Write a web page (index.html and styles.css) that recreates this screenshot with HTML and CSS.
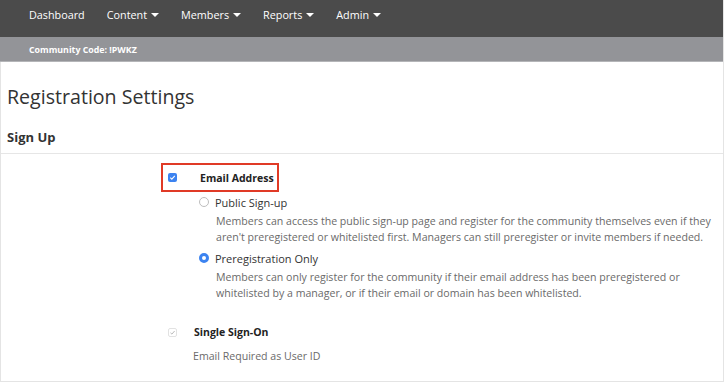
FILE: index.html
```html
<!DOCTYPE html>
<html lang="en">
<head>
    <meta charset="UTF-8">
    <meta name="viewport" content="width=device-width, initial-scale=1.0">
    <title>Registration Settings</title>
    <link rel="stylesheet" href="styles.css">
</head>
<body>
    <div class="frame">
        <nav class="topnav">
            <a href="#">Dashboard</a>
            <a href="#">Content <span class="caret"></span></a>
            <a href="#">Members <span class="caret"></span></a>
            <a href="#">Reports <span class="caret"></span></a>
            <a href="#">Admin <span class="caret"></span></a>
        </nav>
        <div class="codebar">Community Code: !PWKZ</div>

        <div class="page">
            <h1>Registration Settings</h1>
            <h2 class="section-title">Sign Up</h2>

            <div class="field">
                <div class="highlight">
                    <svg class="box" width="9" height="9" viewBox="0 0 9 9">
                        <rect width="9" height="9" rx="2" fill="#3c83f0"/>
                        <path d="M2.3 4.7 L3.8 6.1 L6.8 2.8" fill="none" stroke="#fff" stroke-width="1.1"/>
                    </svg>
                    <span class="field-label">Email Address</span>
                </div>
            </div>

            <div class="options">
                <div class="option">
                    <div class="option-head">
                        <span class="radio"></span>
                        <span>Public Sign-up</span>
                    </div>
                    <p class="desc">Members can access the public sign-up page and register for the community themselves even if they aren't preregistered or whitelisted first. Managers can still preregister or invite members if needed.</p>
                </div>
                <div class="option">
                    <div class="option-head">
                        <span class="radio checked"></span>
                        <span>Preregistration Only</span>
                    </div>
                    <p class="desc">Members can only register for the community if their email address has been preregistered or whitelisted by a manager, or if their email or domain has been whitelisted.</p>
                </div>
            </div>

            <div class="field sso">
                <svg class="box" width="9" height="9" viewBox="0 0 9 9">
                    <rect x="0.5" y="0.5" width="8" height="8" rx="1.5" fill="#fff" stroke="#e2e2e2"/>
                    <path d="M2.5 4.8 L3.9 6.1 L6.6 3" fill="none" stroke="#b9b9b9" stroke-width="1"/>
                </svg>
                <span class="field-label">Single Sign-On</span>
            </div>
            <p class="note">Email Required as User ID</p>
        </div>
    </div>
</body>
</html>
```

FILE: styles.css
```css
body {
    margin: 0;
    font-family: 'Open Sans', 'Liberation Sans', sans-serif;
    background: #fff;
}

.frame {
    width: 723px;
    height: 381px;
    border-right: 1px solid #e4e4e4;
    border-bottom: 1px solid #e4e4e4;
    overflow: hidden;
}

.topnav {
    height: 37px;
    background: #4b4b4b;
    display: flex;
    align-items: center;
    gap: 22px;
    padding: 0 0 8px 29px;
    box-sizing: border-box;
}

.topnav a {
    color: #fff;
    text-decoration: none;
    font-size: 10.8px;
    display: flex;
    align-items: center;
    gap: 4px;
}

.caret {
    width: 0;
    height: 0;
    border-left: 4px solid transparent;
    border-right: 4px solid transparent;
    border-top: 4px solid #fff;
}

.codebar {
    height: 21px;
    background: #939498;
    border-bottom: 1px solid #b4b5b8;
    color: #fff;
    font-size: 8.8px;
    font-weight: bold;
    line-height: 20px;
    padding: 3px 0 0 29px;
}

.page {
    border-left: 1px solid #e4e4e4;
    height: 320px;
    color: #333;
}

h1 {
    margin: 0;
    padding: 22px 0 0 6px;
    font-size: 19.6px;
    font-weight: normal;
    line-height: 26px;
}

.section-title {
    margin: 0;
    padding: 18px 0 7px 6px;
    font-size: 13px;
    font-weight: bold;
    line-height: 18px;
    border-bottom: 1px solid #e6e6e6;
}

.field {
    display: flex;
    align-items: center;
    padding-left: 160px;
    margin-top: 9px;
}

.highlight {
    display: flex;
    align-items: center;
    border: 2px solid #e03a26;
    width: 109px;
    height: 25px;
    padding-left: 5px;
    gap: 23px;
}

.field-label {
    font-size: 10.5px;
    font-weight: bold;
    color: #222;
}

.options {
    padding-left: 198px;
    margin-top: 2px;
}

.option {
    margin-bottom: 5px;
}

.option-head {
    display: flex;
    align-items: center;
    gap: 6px;
    font-size: 11px;
    color: #333;
    height: 16px;
}

.radio {
    width: 10px;
    height: 10px;
    border-radius: 50%;
    border: 1px solid #bdbdbd;
    box-sizing: border-box;
}

.radio.checked {
    border: 3px solid #3c83f0;
    background: #fff;
}

.desc {
    margin: 3px 0 0 17px;
    font-size: 10.6px;
    line-height: 16px;
    color: #6a6a6a;
    width: 500px;
}

.sso {
    margin-top: 24px;
    padding-left: 167px;
    gap: 17px;
}

.note {
    margin: 10px 0 0 192px;
    font-size: 10.6px;
    color: #6a6a6a;
}
```
